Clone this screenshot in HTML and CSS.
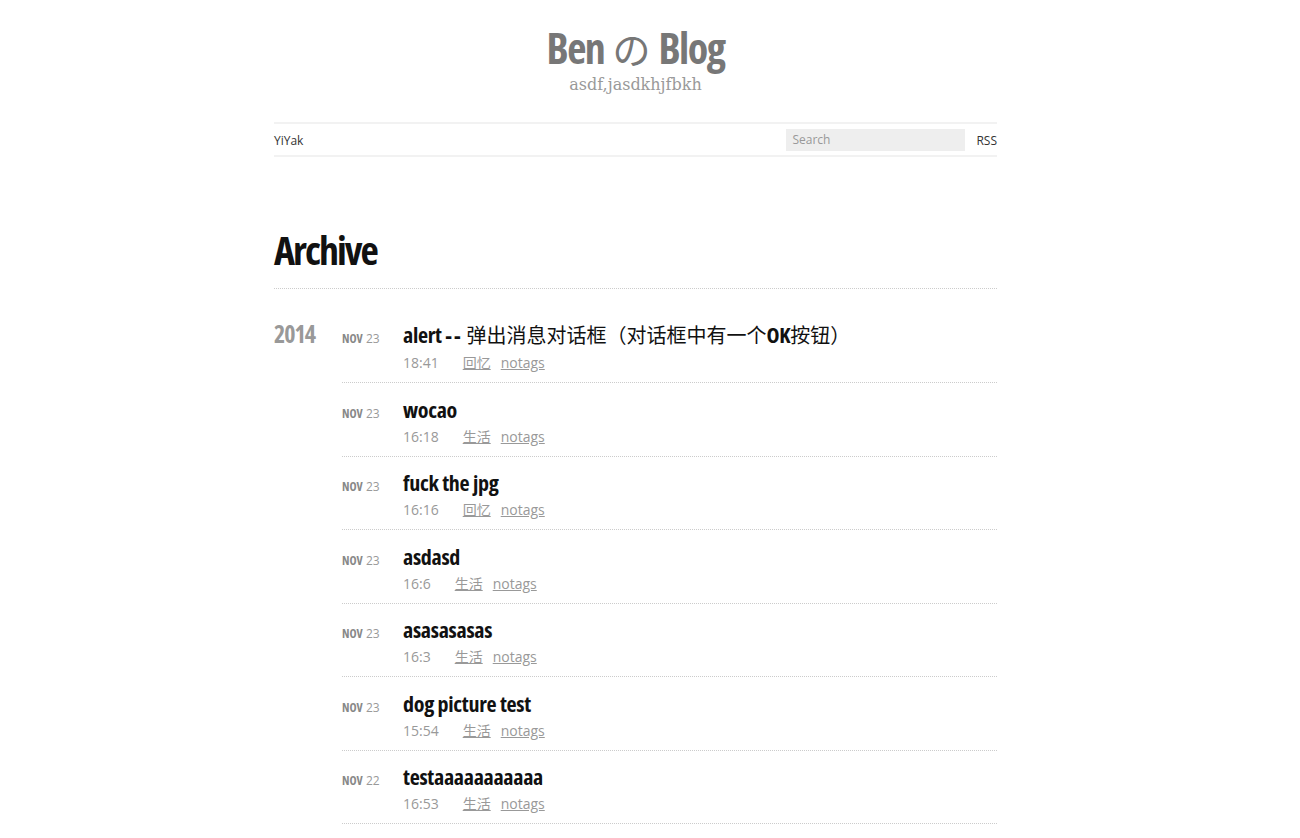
FILE: index.html
```html
<!DOCTYPE html>
<html lang="zh-CN">
<head>
<meta charset="utf-8">
<title>Archive | Ben の Blog</title>
<link rel="stylesheet" href="styles.css">
</head>
<body>
<div class="page">
  <header class="site-header">
    <h1 class="site-title"><a href="#">Ben <span class="cjk">の</span> Blog</a></h1>
    <p class="site-desc">asdf,jasdkhjfbkh</p>
  </header>
  <nav class="main-nav">
    <a class="nav-link" href="#">YiYak</a>
    <div class="nav-right">
      <input class="search" type="text" placeholder="Search">
      <a class="nav-link rss" href="#">RSS</a>
    </div>
  </nav>
  <main class="archive">
    <h2 class="archive-title">Archive</h2>
    <section class="year-group">
      <div class="year">2014</div>
      <div class="posts">
        <article class="post">
          <div class="post-date"><span class="mon">Nov</span> <span class="day">23</span></div>
          <div class="post-body">
            <h3 class="post-title"><a href="#">alert <span class="dash">--</span> <span class="cjk">弹出消息对话框（对话框中有一个</span>OK<span class="cjk">按钮）</span></a></h3>
            <div class="post-meta"><span class="time">18:41</span><a href="#">回忆</a><a href="#">notags</a></div>
          </div>
        </article>
        <article class="post">
          <div class="post-date"><span class="mon">Nov</span> <span class="day">23</span></div>
          <div class="post-body">
            <h3 class="post-title"><a href="#">wocao</a></h3>
            <div class="post-meta"><span class="time">16:18</span><a href="#">生活</a><a href="#">notags</a></div>
          </div>
        </article>
        <article class="post">
          <div class="post-date"><span class="mon">Nov</span> <span class="day">23</span></div>
          <div class="post-body">
            <h3 class="post-title"><a href="#">fuck the jpg</a></h3>
            <div class="post-meta"><span class="time">16:16</span><a href="#">回忆</a><a href="#">notags</a></div>
          </div>
        </article>
        <article class="post">
          <div class="post-date"><span class="mon">Nov</span> <span class="day">23</span></div>
          <div class="post-body">
            <h3 class="post-title"><a href="#">asdasd</a></h3>
            <div class="post-meta"><span class="time">16:6</span><a href="#">生活</a><a href="#">notags</a></div>
          </div>
        </article>
        <article class="post">
          <div class="post-date"><span class="mon">Nov</span> <span class="day">23</span></div>
          <div class="post-body">
            <h3 class="post-title"><a href="#">asasasasas</a></h3>
            <div class="post-meta"><span class="time">16:3</span><a href="#">生活</a><a href="#">notags</a></div>
          </div>
        </article>
        <article class="post">
          <div class="post-date"><span class="mon">Nov</span> <span class="day">23</span></div>
          <div class="post-body">
            <h3 class="post-title"><a href="#">dog picture test</a></h3>
            <div class="post-meta"><span class="time">15:54</span><a href="#">生活</a><a href="#">notags</a></div>
          </div>
        </article>
        <article class="post">
          <div class="post-date"><span class="mon">Nov</span> <span class="day">22</span></div>
          <div class="post-body">
            <h3 class="post-title"><a href="#">testaaaaaaaaaaa</a></h3>
            <div class="post-meta"><span class="time">16:53</span><a href="#">生活</a><a href="#">notags</a></div>
          </div>
        </article>
      </div>
    </section>
  </main>
</div>
</body>
</html>
```

FILE: styles.css
```css
html, body {
  margin: 0;
  padding: 0;
  background: #fff;
}
body {
  font-family: "Open Sans", "Noto Sans CJK SC", sans-serif;
  color: #333;
}
a { color: inherit; text-decoration: none; }

.page {
  width: 723px;
  margin-left: 274px;
}

/* condensed display face */
.site-title,
.archive-title,
.year,
.post-title,
.post-date .mon {
  font-family: "Open Sans", "Noto Sans CJK SC", sans-serif;
  font-stretch: 75%;
  font-weight: 700;
}
.cjk {
  font-family: "Noto Sans CJK SC", sans-serif;
  font-stretch: normal;
  font-weight: 400;
}

.site-header {
  text-align: center;
  padding-top: 19.5px;
}
.site-title {
  margin: 0;
  font-size: 42px;
  line-height: 56px;
  letter-spacing: -1.5px;
  color: #777;
}
.site-title .cjk {
  font-size: 38px;
  letter-spacing: 0;
  margin: 0 2px;
}
.site-desc {
  margin: -0.5px 0 0;
  font-family: "DejaVu Serif", serif;
  font-size: 16px;
  line-height: 20px;
  color: #999;
}

.main-nav {
  margin-top: 27px;
  border-top: 2px solid #f2f2f2;
  border-bottom: 2px solid #f2f2f2;
  height: 31px;
  display: flex;
  align-items: center;
  justify-content: space-between;
  font-size: 12px;
}
.nav-link {
  color: #333;
  line-height: 16px;
  padding-top: 3px;
}
.nav-right {
  display: flex;
  align-items: center;
  gap: 11px;
}
.search {
  width: 179px;
  height: 22px;
  box-sizing: border-box;
  border: none;
  background: #eee;
  padding: 0 6px;
  font-family: "Open Sans", sans-serif;
  font-size: 12px;
  color: #333;
  outline: none;
}
.search::placeholder { color: #999; }

.archive { padding-top: 68px; }
.archive-title {
  margin: 0;
  font-size: 40px;
  line-height: 50px;
  letter-spacing: -2px;
  color: #111;
  padding-bottom: 13px;
  border-bottom: 1px dotted #ccc;
}

.year-group {
  display: flex;
  align-items: baseline;
  padding-top: 28px;
}
.year {
  width: 68px;
  flex: none;
  font-size: 24px;
  letter-spacing: -1px;
  color: #999;
}
.posts { flex: 1; }
.post {
  display: flex;
  align-items: baseline;
  padding: 10.5px 0 8px;
  border-bottom: 1px dotted #ccc;
}
.post:first-child { padding-top: 0; }
.post-date {
  width: 61px;
  flex: none;
  font-size: 12px;
  color: #999;
}
.post-date .mon {
  text-transform: uppercase;
  color: #888;
}
.post-date .day {
  font-family: "Open Sans", sans-serif;
  color: #999;
}
.post-title {
  margin: 0;
  font-size: 22px;
  line-height: 30px;
  letter-spacing: -0.3px;
  color: #111;
}
.post-title .dash {
  letter-spacing: 2px;
}
.post-title .cjk {
  font-size: 20px;
  letter-spacing: 0;
}
.post-meta {
  margin-top: 2px;
  font-size: 14px;
  line-height: 22px;
  color: #999;
  display: flex;
  gap: 10px;
}
.post-meta .time { margin-right: 14px; }
.post-meta a {
  color: #999;
  text-decoration: underline;
}
```
